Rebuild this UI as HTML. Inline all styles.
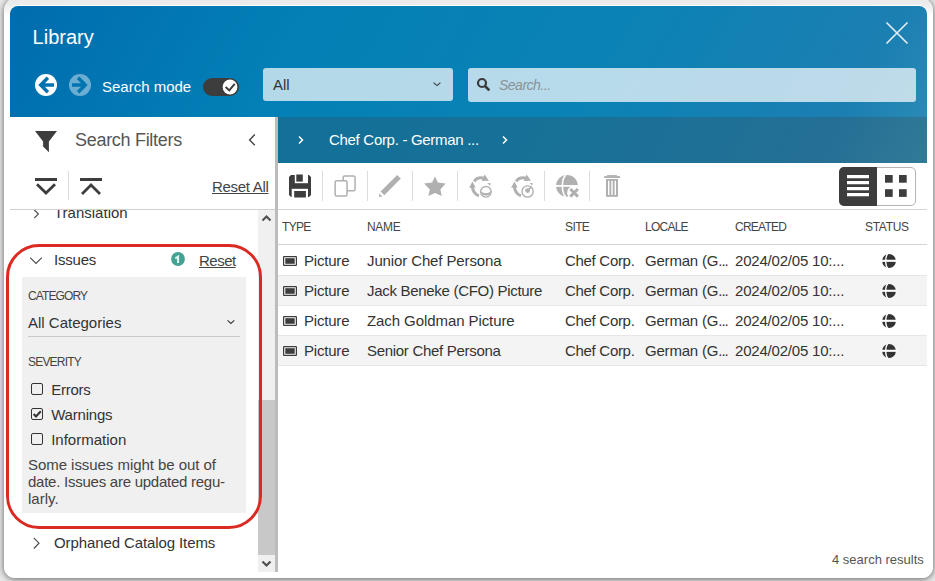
<!DOCTYPE html>
<html><head><meta charset="utf-8">
<style>
*{box-sizing:border-box}
html,body{margin:0;padding:0;width:935px;height:581px;overflow:hidden;background:#e9e9e9;font-family:"Liberation Sans",sans-serif}
.a{position:absolute}
.t{position:absolute;line-height:1;white-space:nowrap;font-family:"Liberation Sans",sans-serif}
svg{overflow:visible}
</style></head>
<body>
<div class="a" style="left:4px;top:-3px;width:929px;height:581px;background:linear-gradient(#e9e9e9 0,#ededed 8px,#fff 19px);border-radius:14px 14px 11px 11px;box-shadow:0 1px 7px rgba(0,0,0,.6)"></div>
<div class="a" style="left:9px;top:5px;width:919px;height:60px;background:#fff;border-radius:9px 9px 0 0"></div>
<div class="a" style="left:10px;top:6px;width:917px;height:157px;background:linear-gradient(120deg,#006cae 0%,#0380b6 30%,#0b82b5 62%,#1c7fb2 89%,#2d8eb6 100%);border-radius:8px 8px 0 0"></div>
<div class="a" style="left:278px;top:117px;width:649px;height:46px;background:rgba(65,65,65,.25);"></div>
<div class="a" style="left:10px;top:117px;width:265px;height:455px;background:#fff;"></div>
<div class="a" style="left:275px;top:117px;width:3px;height:455px;background:#bcbcbc;"></div>
<div class="t" style="left:32.6px;top:27.07px;font-size:20px;color:#fff">Library</div>
<svg class="a" style="left:35px;top:74px" width="22" height="22" viewBox="0 0 22 22"><defs><mask id="m1"><rect width="22" height="22" fill="#fff"/><path d="M5.7 11H19M12.9 3.8L5.7 11L12.9 18.2" stroke="#000" stroke-width="3.4" fill="none"/></mask></defs><circle cx="11" cy="11" r="11" fill="#fff" mask="url(#m1)"/></svg>
<svg class="a" style="left:69px;top:74px" width="22" height="22" viewBox="0 0 22 22"><defs><mask id="m2"><rect width="22" height="22" fill="#fff"/><path d="M3 11H16.3M9.1 3.8L16.3 11L9.1 18.2" stroke="#000" stroke-width="3.4" fill="none"/></mask></defs><circle cx="11" cy="11" r="11" fill="#fff" fill-opacity=".42" mask="url(#m2)"/></svg>
<div class="t" style="left:102px;top:79.30px;font-size:15px;color:#fff">Search mode</div>
<div class="a" style="left:203px;top:78px;width:36px;height:18px;background:#3d3d3d;border-radius:9px"></div>
<svg class="a" style="left:222px;top:79px" width="16" height="16" viewBox="0 0 16 16"><circle cx="8" cy="8" r="7.4" fill="#fff"/><path d="M3.6 8L7.3 11.4L12.7 4.9" stroke="#3d3d3d" stroke-width="2" fill="none"/></svg>
<div class="a" style="left:263px;top:68px;width:190px;height:33px;background:rgba(255,255,255,.7);border-radius:3px"></div>
<div class="t" style="left:273px;top:77.30px;font-size:15px;color:#333">All</div>
<svg class="a" style="left:432px;top:80px" width="10" height="8" viewBox="0 0 10 8"><path d="M1.6 2.6L5 5.6L8.4 2.6" stroke="#3a3a3a" stroke-width="1.15" fill="none"/></svg>
<div class="a" style="left:468px;top:68px;width:448px;height:34px;background:rgba(255,255,255,.71);border-radius:3px"></div>
<svg class="a" style="left:476px;top:77px" width="15" height="15" viewBox="0 0 15 15"><circle cx="6" cy="6" r="4" stroke="#3a3a3a" stroke-width="2.2" fill="none"/><path d="M9 9l4.3 4.3" stroke="#3a3a3a" stroke-width="2.6"/></svg>
<div class="t" style="left:499px;top:77.95px;font-size:14px;color:#8a9298;letter-spacing:-0.5px;font-style:italic">Search...</div>
<svg class="a" style="left:885px;top:21px" width="24" height="24" viewBox="0 0 24 24"><path d="M1.5 1.5l21 21M22.5 1.5l-21 21" stroke="#e8f0f4" stroke-width="1.6"/></svg>
<svg class="a" style="left:297px;top:135px" width="8" height="10" viewBox="0 0 8 10"><path d="M2 1.5l3.5 3.5L2 8.5" stroke="#fff" stroke-width="1.5" fill="none"/></svg>
<div class="t" style="left:329px;top:132.30px;font-size:15px;color:#fff;letter-spacing:-0.3px">Chef Corp. - German ...</div>
<svg class="a" style="left:501px;top:135px" width="8" height="10" viewBox="0 0 8 10"><path d="M2 1.5l3.5 3.5L2 8.5" stroke="#fff" stroke-width="1.5" fill="none"/></svg>
<svg class="a" style="left:35px;top:131px" width="22" height="22" viewBox="0 0 22 22"><path d="M0 0H22L13.9 10.6V21.3L8.1 15.6V10.6Z" fill="#3d3d3d"/></svg>
<div class="t" style="left:75px;top:130.56px;font-size:18px;color:#555;letter-spacing:-0.3px">Search Filters</div>
<svg class="a" style="left:248px;top:133px" width="10" height="14" viewBox="0 0 10 14"><path d="M6.8 1.5L1.6 7 6.8 12.3" stroke="#444" stroke-width="1.4" fill="none"/></svg>
<svg class="a" style="left:35px;top:178px" width="22" height="17" viewBox="0 0 22 17"><path d="M0 1.5h22" stroke="#3d3d3d" stroke-width="3"/><path d="M2 6.3L11 15L20 6.3" stroke="#3d3d3d" stroke-width="2.8" fill="none"/></svg>
<div class="a" style="left:68px;top:171px;width:1px;height:29px;background:#ddd;"></div>
<svg class="a" style="left:80px;top:178px" width="22" height="17" viewBox="0 0 22 17"><path d="M0 1.5h22" stroke="#3d3d3d" stroke-width="3"/><path d="M2 16l9-9 9 9" stroke="#3d3d3d" stroke-width="2.8" fill="none"/></svg>
<div class="t" style="left:212px;top:178.70px;font-size:15px;color:#444;letter-spacing:-0.3px;text-decoration:underline">Reset All</div>
<div class="a" style="left:10px;top:209px;width:265px;height:1px;background:#d0d0d0;"></div>
<div class="a" style="left:10px;top:210px;width:248px;height:362px;overflow:hidden">
<svg class="a" style="left:23px;top:-1px" width="8" height="10" viewBox="0 0 8 10"><path d="M1.2 0.8L5.4 5L1.2 9.2" stroke="#4a4a4a" stroke-width="1.15" fill="none"/></svg>
<div class="t" style="left:44px;top:-4.70px;font-size:15px;color:#333">Translation</div>
</div>
<svg class="a" style="left:28px;top:255px" width="16" height="10" viewBox="0 0 16 10"><path d="M2.2 2.6L8 8.4L13.8 2.6" stroke="#4a4a4a" stroke-width="1.15" fill="none"/></svg>
<div class="t" style="left:54px;top:251.80px;font-size:15px;color:#333;letter-spacing:-0.2px">Issues</div>
<svg class="a" style="left:171px;top:252px" width="14" height="14" viewBox="0 0 14 14"><circle cx="7" cy="7" r="6.9" fill="#44a294"/><path d="M4.3 6.4L7.05 4.6V10.9" stroke="#e4f3ef" stroke-width="2.1" fill="none"/></svg>
<div class="t" style="left:199px;top:252.90px;font-size:15px;color:#444;letter-spacing:-0.5px;text-decoration:underline">Reset</div>
<div class="a" style="left:22px;top:277px;width:224px;height:236px;background:#f0f0f0;"></div>
<div class="t" style="left:28px;top:289.84px;font-size:12px;color:#444;letter-spacing:-0.9px">CATEGORY</div>
<div class="t" style="left:28px;top:314.70px;font-size:15px;color:#333">All Categories</div>
<svg class="a" style="left:226px;top:318px" width="10" height="8" viewBox="0 0 10 8"><path d="M1.5 2.3L4.9 5.5L8.3 2.3" stroke="#3a3a3a" stroke-width="1.15" fill="none"/></svg>
<div class="a" style="left:28px;top:336px;width:212px;height:1px;background:#c8c8c8;"></div>
<div class="t" style="left:28px;top:355.74px;font-size:12px;color:#444;letter-spacing:-0.8px">SEVERITY</div>
<div class="a" style="left:31px;top:383px;width:12px;height:12px;border:1.25px solid #333;border-radius:2px"></div>
<div class="t" style="left:51.2px;top:382.00px;font-size:15px;color:#333;letter-spacing:-0.25px">Errors</div>
<div class="a" style="left:31px;top:408px;width:12px;height:12px;border:1.25px solid #333;border-radius:2px"></div>
<svg class="a" style="left:31px;top:408px" width="12" height="12" viewBox="0 0 12 12"><path d="M2.6 6l2.4 2.5 4.8-5.2" stroke="#333" stroke-width="2" fill="none"/></svg>
<div class="t" style="left:51.2px;top:407.00px;font-size:15px;color:#333;letter-spacing:-0.2px">Warnings</div>
<div class="a" style="left:31px;top:433px;width:12px;height:12px;border:1.25px solid #333;border-radius:2px"></div>
<div class="t" style="left:51.2px;top:432.00px;font-size:15px;color:#333;letter-spacing:0px">Information</div>
<div class="t" style="left:28px;top:457.30px;font-size:15px;color:#444;letter-spacing:-0.05px">Some issues might be out of</div>
<div class="t" style="left:28px;top:474.20px;font-size:15px;color:#444;letter-spacing:-0.25px">date. Issues are updated regu-</div>
<div class="t" style="left:28px;top:491.20px;font-size:15px;color:#444">larly.</div>
<svg class="a" style="left:32px;top:537px" width="9" height="12" viewBox="0 0 9 12"><path d="M1.8 0.9L7 6.2L1.8 11.5" stroke="#4a4a4a" stroke-width="1.15" fill="none"/></svg>
<div class="t" style="left:54px;top:535.30px;font-size:15px;color:#333;letter-spacing:-0.1px">Orphaned Catalog Items</div>
<div class="a" style="left:258px;top:210px;width:17px;height:362px;background:#f0f0f0;"></div>
<div class="a" style="left:258px;top:400px;width:17px;height:155px;background:#c8c8c8;"></div>
<svg class="a" style="left:261px;top:214px" width="11" height="8" viewBox="0 0 11 8"><path d="M1.5 6.5l4-4 4 4" stroke="#505050" stroke-width="2.2" fill="none"/></svg>
<svg class="a" style="left:261px;top:560px" width="11" height="8" viewBox="0 0 11 8"><path d="M1.5 1.5l4 4 4-4" stroke="#505050" stroke-width="2.2" fill="none"/></svg>
<div class="a" style="left:6px;top:244px;width:256px;height:285px;background:transparent;border:3px solid #db2a22;border-radius:33px"></div>
<svg class="a" style="left:289px;top:175px" width="22" height="22" viewBox="0 0 22 22"><path d="M2 0H20L22 2V20L20 22H2L0 20V2Z" fill="#3d3d3d"/><rect x="5.8" y="-0.5" width="13.2" height="8.7" fill="#fff"/><rect x="7.3" y="-0.5" width="6.5" height="7.1" fill="#3d3d3d"/><rect x="2.7" y="13.8" width="16.3" height="8.7" fill="#fff"/><rect x="5.2" y="16" width="11.7" height="6.5" fill="#3d3d3d"/></svg>
<div class="a" style="left:322px;top:171px;width:1px;height:30px;background:#ddd;"></div>
<svg class="a" style="left:330px;top:170px" width="30" height="30" viewBox="0 0 30 30"><rect x="13.15" y="5.95" width="11.9" height="14.7" rx="1.5" fill="#fff" stroke="#b0b0b0" stroke-width="1.5"/><rect x="5.15" y="10.75" width="11.9" height="15.3" rx="1.5" fill="#fff" stroke="#b0b0b0" stroke-width="1.5"/></svg>
<div class="a" style="left:367px;top:171px;width:1px;height:30px;background:#ddd;"></div>
<svg class="a" style="left:375px;top:170px" width="30" height="30" viewBox="0 0 30 30"><path d="M22.2 4.9L25.8 8.6L9.3 25.3L5.6 21.6Z" fill="#b0b0b0"/><path d="M4.1 23.2V26.8H7.7Z" fill="#b0b0b0"/></svg>
<div class="a" style="left:412px;top:171px;width:1px;height:30px;background:#ddd;"></div>
<svg class="a" style="left:420px;top:170px" width="30" height="30" viewBox="0 0 30 30"><path d="M15 6.2L17.8 12.4L25.6 13.5L20.4 19.4L21.7 26.1L15 23L8.3 26.1L9.8 19.4L4.1 13.5L12.1 12.4Z" fill="#b0b0b0"/></svg>
<div class="a" style="left:457px;top:171px;width:1px;height:30px;background:#ddd;"></div>
<svg class="a" style="left:465px;top:170px" width="30" height="30" viewBox="0 0 30 30"><path d="M9.3 11.4C11 8.5 15 7.2 19.5 8.3" stroke="#b0b0b0" stroke-width="3" fill="none"/><path d="M19.6 4.6L24 10.8L16.8 11Z" fill="#b0b0b0"/><path d="M7.5 11.4L4 17.8L10.6 17.4Z" fill="#b0b0b0"/><path d="M7.4 16.5C7.6 21 10 24.3 13.9 25.8" stroke="#b0b0b0" stroke-width="3" fill="none"/><circle cx="20.9" cy="21.8" r="5.3" fill="#fff" stroke="#b0b0b0" stroke-width="1.4"/><path d="M15.7 21.3Q20.9 25 26.1 21.3A5.3 5.3 0 0 1 15.7 21.3Z" fill="#b0b0b0"/><path d="M22.2 13L25.8 13.2L25 15.8Z" fill="#b0b0b0"/></svg>
<svg class="a" style="left:507px;top:170px" width="30" height="30" viewBox="0 0 30 30"><path d="M9.3 11.4C11 8.5 15 7.2 19.5 8.3" stroke="#b0b0b0" stroke-width="3" fill="none"/><path d="M19.6 4.6L24 10.8L16.8 11Z" fill="#b0b0b0"/><path d="M7.5 11.4L4 17.8L10.6 17.4Z" fill="#b0b0b0"/><path d="M7.4 16.5C7.6 21 10 24.3 13.9 25.8" stroke="#b0b0b0" stroke-width="3" fill="none"/><circle cx="20.6" cy="21.5" r="5.6" fill="#fff" stroke="#b0b0b0" stroke-width="1.4"/><circle cx="20.6" cy="20.6" r="2.4" fill="#b0b0b0"/><path d="M20.6 20.6L24.5 16.5" stroke="#b0b0b0" stroke-width="1.6"/><path d="M22.5 13L25.8 13.2L25 15.5Z" fill="#b0b0b0"/></svg>
<div class="a" style="left:544px;top:171px;width:1px;height:30px;background:#ddd;"></div>
<svg class="a" style="left:552px;top:170px" width="30" height="30" viewBox="0 0 30 30"><circle cx="15" cy="15.9" r="10.9" fill="#b0b0b0"/><path d="M4 15.9H26" stroke="#fff" stroke-width="1.8"/><path d="M13.9 4.9C9.2 9 9.2 22.8 13.9 26.9" stroke="#fff" stroke-width="1.6" fill="none"/><circle cx="22.1" cy="22.8" r="7" fill="#fff"/><path d="M18.3 19l7.6 7.6M25.9 19l-7.6 7.6" stroke="#b0b0b0" stroke-width="3"/></svg>
<div class="a" style="left:589px;top:171px;width:1px;height:30px;background:#ddd;"></div>
<svg class="a" style="left:597px;top:170px" width="30" height="30" viewBox="0 0 30 30"><rect x="7.2" y="6.1" width="15.8" height="1.9" fill="#b0b0b0"/><rect x="10" y="5.1" width="9.9" height="1.2" fill="#b0b0b0"/><rect x="9" y="9" width="12" height="17.8" fill="#b0b0b0"/><path d="M11.7 10.8V24.9M15 10.8V24.9M18.3 10.8V24.9" stroke="#fff" stroke-width="1.4"/></svg>
<div class="a" style="left:838.5px;top:166.5px;width:77px;height:39px;background:#fff;border:1px solid #b4b4b4;border-radius:5px"></div>
<div class="a" style="left:838.5px;top:166.5px;width:38.5px;height:39px;background:#3d3d3d;border-radius:5px 0 0 5px"></div>
<svg class="a" style="left:846px;top:174px" width="24" height="24" viewBox="0 0 24 24"><path d="M1 2.6h22M1 8.6h22M1 14.6h22M1 20.6h22" stroke="#fff" stroke-width="3.2"/></svg>
<svg class="a" style="left:884px;top:174px" width="24" height="24" viewBox="0 0 24 24"><rect x="1" y="1" width="7.7" height="7.7" fill="#3d3d3d"/><rect x="15" y="1" width="7.7" height="7.7" fill="#3d3d3d"/><rect x="1" y="15.2" width="7.7" height="7.7" fill="#3d3d3d"/><rect x="15" y="15.2" width="7.7" height="7.7" fill="#3d3d3d"/></svg>
<div class="a" style="left:278px;top:209px;width:649px;height:1px;background:#d5d5d5;"></div>
<div class="t" style="left:282px;top:220.74px;font-size:12px;color:#444;letter-spacing:-0.7px">TYPE</div>
<div class="t" style="left:367px;top:220.74px;font-size:12px;color:#444;letter-spacing:-0.3px">NAME</div>
<div class="t" style="left:565px;top:220.74px;font-size:12px;color:#444;letter-spacing:-0.6px">SITE</div>
<div class="t" style="left:645px;top:220.74px;font-size:12px;color:#444;letter-spacing:-0.75px">LOCALE</div>
<div class="t" style="left:735px;top:220.74px;font-size:12px;color:#444;letter-spacing:-0.75px">CREATED</div>
<div class="t" style="left:865px;top:220.74px;font-size:12px;color:#444;letter-spacing:-0.3px">STATUS</div>
<div class="a" style="left:278px;top:244px;width:649px;height:1px;background:#d5d5d5;"></div>
<div class="a" style="left:278px;top:276px;width:649px;height:29px;background:#f4f4f4;"></div>
<div class="a" style="left:278px;top:336px;width:649px;height:29px;background:#f4f4f4;"></div>
<div class="a" style="left:278px;top:275px;width:649px;height:1px;background:#e6e6e6;"></div>
<div class="a" style="left:278px;top:305px;width:649px;height:1px;background:#e6e6e6;"></div>
<div class="a" style="left:278px;top:335px;width:649px;height:1px;background:#e6e6e6;"></div>
<div class="a" style="left:278px;top:365px;width:649px;height:1px;background:#e6e6e6;"></div>
<svg class="a" style="left:283px;top:256px" width="14" height="10" viewBox="0 0 14 10"><rect x="0.6" y="0.6" width="12.8" height="8.8" rx="0.5" fill="none" stroke="#3d3d3d" stroke-width="1.2"/><rect x="2.3" y="2.2" width="9.4" height="5.6" fill="#3d3d3d"/></svg>
<div class="t" style="left:304px;top:253.10px;font-size:15px;color:#333;letter-spacing:-0.2px">Picture</div>
<div class="t" style="left:367px;top:253.10px;font-size:15px;color:#333;letter-spacing:-0.12px">Junior Chef Persona</div>
<div class="t" style="left:565px;top:253.10px;font-size:15px;color:#333;letter-spacing:-0.3px">Chef Corp.</div>
<div class="t" style="left:645px;top:253.10px;font-size:15px;color:#333;letter-spacing:-0.2px">German (G<span style='letter-spacing:-1px'>...</span></div>
<div class="t" style="left:735px;top:253.10px;font-size:15px;color:#333;letter-spacing:-0.2px">2024/02/05 10:...</div>
<svg class="a" style="left:881px;top:253px" width="16" height="16" viewBox="0 0 16 16"><circle cx="8" cy="8" r="6.9" fill="#333"/><path d="M0 7.8H16" stroke="#fff" stroke-width="2.1"/><path d="M6.9 0.6C4 3.5 4 12.5 6.9 15.4" stroke="#fff" stroke-width="1.4" fill="none"/></svg>
<svg class="a" style="left:283px;top:286px" width="14" height="10" viewBox="0 0 14 10"><rect x="0.6" y="0.6" width="12.8" height="8.8" rx="0.5" fill="none" stroke="#3d3d3d" stroke-width="1.2"/><rect x="2.3" y="2.2" width="9.4" height="5.6" fill="#3d3d3d"/></svg>
<div class="t" style="left:304px;top:283.10px;font-size:15px;color:#333;letter-spacing:-0.2px">Picture</div>
<div class="t" style="left:367px;top:283.10px;font-size:15px;color:#333;letter-spacing:-0.3px">Jack Beneke (CFO) Picture</div>
<div class="t" style="left:565px;top:283.10px;font-size:15px;color:#333;letter-spacing:-0.3px">Chef Corp.</div>
<div class="t" style="left:645px;top:283.10px;font-size:15px;color:#333;letter-spacing:-0.2px">German (G<span style='letter-spacing:-1px'>...</span></div>
<div class="t" style="left:735px;top:283.10px;font-size:15px;color:#333;letter-spacing:-0.2px">2024/02/05 10:...</div>
<svg class="a" style="left:881px;top:283px" width="16" height="16" viewBox="0 0 16 16"><circle cx="8" cy="8" r="6.9" fill="#333"/><path d="M0 7.8H16" stroke="#fff" stroke-width="2.1"/><path d="M6.9 0.6C4 3.5 4 12.5 6.9 15.4" stroke="#fff" stroke-width="1.4" fill="none"/></svg>
<svg class="a" style="left:283px;top:316px" width="14" height="10" viewBox="0 0 14 10"><rect x="0.6" y="0.6" width="12.8" height="8.8" rx="0.5" fill="none" stroke="#3d3d3d" stroke-width="1.2"/><rect x="2.3" y="2.2" width="9.4" height="5.6" fill="#3d3d3d"/></svg>
<div class="t" style="left:304px;top:313.10px;font-size:15px;color:#333;letter-spacing:-0.2px">Picture</div>
<div class="t" style="left:367px;top:313.10px;font-size:15px;color:#333;letter-spacing:-0.08px">Zach Goldman Picture</div>
<div class="t" style="left:565px;top:313.10px;font-size:15px;color:#333;letter-spacing:-0.3px">Chef Corp.</div>
<div class="t" style="left:645px;top:313.10px;font-size:15px;color:#333;letter-spacing:-0.2px">German (G<span style='letter-spacing:-1px'>...</span></div>
<div class="t" style="left:735px;top:313.10px;font-size:15px;color:#333;letter-spacing:-0.2px">2024/02/05 10:...</div>
<svg class="a" style="left:881px;top:313px" width="16" height="16" viewBox="0 0 16 16"><circle cx="8" cy="8" r="6.9" fill="#333"/><path d="M0 7.8H16" stroke="#fff" stroke-width="2.1"/><path d="M6.9 0.6C4 3.5 4 12.5 6.9 15.4" stroke="#fff" stroke-width="1.4" fill="none"/></svg>
<svg class="a" style="left:283px;top:346px" width="14" height="10" viewBox="0 0 14 10"><rect x="0.6" y="0.6" width="12.8" height="8.8" rx="0.5" fill="none" stroke="#3d3d3d" stroke-width="1.2"/><rect x="2.3" y="2.2" width="9.4" height="5.6" fill="#3d3d3d"/></svg>
<div class="t" style="left:304px;top:343.10px;font-size:15px;color:#333;letter-spacing:-0.2px">Picture</div>
<div class="t" style="left:367px;top:343.10px;font-size:15px;color:#333;letter-spacing:-0.3px">Senior Chef Persona</div>
<div class="t" style="left:565px;top:343.10px;font-size:15px;color:#333;letter-spacing:-0.3px">Chef Corp.</div>
<div class="t" style="left:645px;top:343.10px;font-size:15px;color:#333;letter-spacing:-0.2px">German (G<span style='letter-spacing:-1px'>...</span></div>
<div class="t" style="left:735px;top:343.10px;font-size:15px;color:#333;letter-spacing:-0.2px">2024/02/05 10:...</div>
<svg class="a" style="left:881px;top:343px" width="16" height="16" viewBox="0 0 16 16"><circle cx="8" cy="8" r="6.9" fill="#333"/><path d="M0 7.8H16" stroke="#fff" stroke-width="2.1"/><path d="M6.9 0.6C4 3.5 4 12.5 6.9 15.4" stroke="#fff" stroke-width="1.4" fill="none"/></svg>
<div class="t" style="left:832px;top:552.60px;font-size:13px;color:#555">4 search results</div>
</body></html>
